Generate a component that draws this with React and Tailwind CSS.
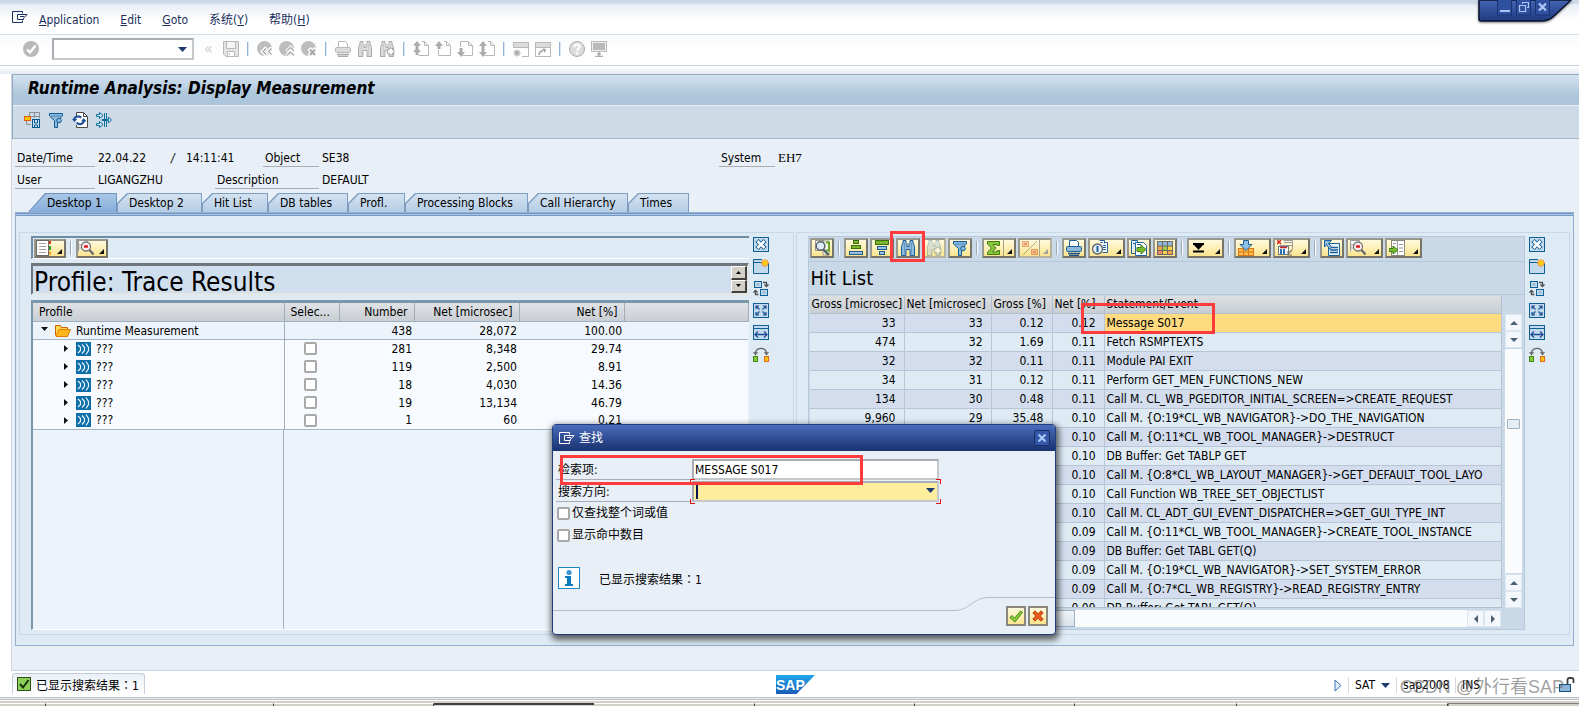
import React from "react";

const UI_FONT = "font-['DejaVu_Sans_Condensed','Noto_Sans','Noto_Sans_CJK_SC',sans-serif]";

/* ---------- icons ---------- */

function Icon({ children, w = 16, h = 16, className = "" }) {
  return (
    <svg width={w} height={h} viewBox={`0 0 ${w} ${h}`} fill="none" aria-hidden="true" className={`shrink-0 ${className}`}>
      {children}
    </svg>
  );
}

const MenuMark = ({ color = "#1b2f5c" }) => (
  <Icon w={16} h={13}>
    <path d="M10.500 2.500V.500h-10v11h10v-2" stroke={color} />
    <path d="M11.500 8.500h-6v-5h9.500l-4.500 5z" stroke={color} />
    <path d="M8 5.500h4" stroke={color} />
  </Icon>
);

const Caret = ({ color = "#1f3a6e" }) => (
  <Icon w={9} h={5}>
    <path d="M0 0h9L4.500 5z" fill={color} />
  </Icon>
);

const G = "#b9b9b9";
const GL = "#dcdcdc";

const Enter = () => (
  <Icon>
    <circle cx="8" cy="8" r="8" fill={G} />
    <path d="M4 8.500l3 3 5.500-7" stroke="#fff" strokeWidth="2.400" />
  </Icon>
);
const Save = () => (
  <Icon>
    <path d="M1 .500h14.500v15H3L.500 13V.500z" fill="#e4e4e4" stroke={G} />
    <path d="M3.500 1v6.500h9V1" fill="#f6f6f6" stroke={G} />
    <path d="M4.500 15v-4.500h7V15M6.500 12v2" fill="#fff" stroke={G} />
  </Icon>
);
const Round = ({ children }) => (
  <Icon>
    <circle cx="7.500" cy="7.500" r="7.500" fill="#bdbdbd" />
    {children}
  </Icon>
);
const Back = () => (
  <Round>
    <path d="M9.500 6.500L5.500 10.500l4 4M15 6.500l-4 4 4 4" stroke="#fff" strokeWidth="3.400" />
    <path d="M9 7.500l-3 3 3 3M14.500 7.500l-3 3 3 3" stroke="#a8a8a8" strokeWidth="1.300" />
  </Round>
);
const Exit = () => (
  <Round>
    <path d="M7.500 10.500l4-4 4 4M7.500 15l4-4 4 4" stroke="#fff" strokeWidth="3.400" />
    <path d="M8 10l3.500-3.500L15 10M8 14.500l3.500-3.500 3.500 3.500" stroke="#a8a8a8" strokeWidth="1.300" />
  </Round>
);
const Cancel = () => (
  <Round>
    <path d="M8 7.500l7 7.500M15 7.500L8 15" stroke="#fff" strokeWidth="4.500" />
    <path d="M9 8.500l5 5.500M14 8.500L9 14" stroke="#a8a8a8" strokeWidth="2" />
  </Round>
);
const Printer = ({ line = G, fill = GL, paper = "#fff", dark = "#a9a9a9" }) => (
  <Icon>
    <path d="M3.500 7V.500h7l2 2V7" fill={paper} stroke={line} />
    <rect x=".500" y="6.500" width="15" height="5" rx="1" fill={fill} stroke={line} />
    <path d="M2 13.500h12M3 15.500h10" stroke={dark} strokeWidth="1.400" />
  </Icon>
);
const Binoculars = ({ line = "#a9a9a9", fill = GL, plus }) => (
  <Icon>
    <path d="M3 .500h3v2l1 1v3h2v-3l1-1v-2h3v2l1.500 4v9h-4.500V9.500H6v6H1.500v-9L3 2.500z" fill={fill} stroke={line} />
    <path d="M4.500 3v11M11.500 3v11" stroke={line} strokeOpacity=".35" />
    {plus && (
      <>
        <path d="M8 10.500h7.500M11.750 6.700v7.600" stroke={line} strokeWidth="4.500" />
        <path d="M9 10.500h5.500M11.750 7.700v5.600" stroke="#fff" strokeWidth="2.400" />
      </>
    )}
  </Icon>
);
const Page = ({ children }) => (
  <Icon>
    <path d="M9 .500h2.500l4 4v10h-10M11.500.500v4h4" stroke={G} fill="none" />
    {children}
  </Icon>
);
const FirstPage = () => (
  <Page>
    <path d="M4 0l4 4.500H0zM2.500 4h3v6h-3zM4 6.500L8 11H0zM2.500 11h3v3h-3z" fill="#ababab" />
  </Page>
);
const PrevPage = () => (
  <Page>
    <path d="M4 0l4 5H5.500v3h-3V5H0z" fill="#ababab" />
    <path d="M3.500 9v5.500h3" stroke={G} />
  </Page>
);
const NextPage = () => (
  <Page>
    <path d="M4 16l4-5H5.500V7h-3v4H0z" fill="#ababab" />
    <path d="M3.500 6V.500h6" stroke={G} />
  </Page>
);
const LastPage = () => (
  <Page>
    <path d="M4 16l4-5H5.500V5H8L4 0 0 5h2.500v6H0z" fill="#ababab" />
  </Page>
);
const NewSession = () => (
  <Icon>
    <path d="M.500 7V1.500h15v14H9" fill="none" stroke={G} />
    <path d="M1 2h14v4H1z" fill={GL} />
    <path d="M.500 6.500h15" stroke={G} />
    <path d="M4 8.500v7M.500 12h7M1.500 9.500l5 5M6.500 9.500l-5 5" stroke="#b0b0b0" strokeWidth="1.300" />
  </Icon>
);
const Shortcut = () => (
  <Icon>
    <rect x=".500" y="1.500" width="15" height="14" stroke={G} />
    <path d="M1 2h14v4H1z" fill={GL} />
    <path d="M.500 6.500h15" stroke={G} />
    <path d="M4 14c0-3 1.500-4 4-4" stroke="#a0a0a0" strokeWidth="1.600" />
    <path d="M7 7.500l4 .500-1 4z" fill="#a0a0a0" />
  </Icon>
);
const Help = () => (
  <Icon>
    <circle cx="8" cy="8" r="7.500" fill={GL} stroke="#adadad" />
    <path d="M5.300 6.300c0-3.600 5.400-3.400 5.400-.500 0 1.800-2.700 1.900-2.700 4" stroke="#fff" strokeWidth="2" />
    <circle cx="8" cy="12.300" r="1.200" fill="#fff" />
  </Icon>
);
const Monitor = () => (
  <Icon>
    <rect x=".500" y=".500" width="15" height="10" fill="#eee" stroke={G} />
    <rect x="2" y="2" width="12" height="7" fill="#b9b9b9" />
    <path d="M8 11v4M4 15.500h8M6 13h4" stroke="#adadad" strokeWidth="1.500" />
  </Icon>
);

const SaveLayout = () => (
  <Icon>
    <path d="M5.500 9V.500h10V6M5.500 4.500h10M10.500.500v5M2.500 8v4.500h4" stroke="#8a8f96" />
    <rect x=".500" y="4.500" width="6" height="4" fill="#ffc400" stroke="#e05a14" />
    <rect x="8.500" y="7.500" width="7" height="8" fill="#cfe3f2" stroke="#00588f" />
    <path d="M10.500 8v3h3V8M10.500 15v-2h3v2" stroke="#00588f" />
  </Icon>
);
const Funnel = ({ line = "#0e5f96", fill = "#8fb9dc" }) => (
  <Icon>
    <path d="M1.500 1.500h13v2.500L9.500 8.500v7h-3v-7L1.500 4z" fill={fill} stroke={line} />
    <path d="M3 4h10" stroke={line} strokeOpacity=".5" />
    <circle cx="11" cy="8.500" r="2.300" fill={fill} stroke={line} />
  </Icon>
);
const Refresh = () => (
  <Icon>
    <path d="M4.500 4V.500h7l4 4v11h-11V13" fill="#fff" stroke="#4a4a4a" />
    <path d="M11.500.500v4h4" stroke="#4a4a4a" />
    <path d="M2 7.500c.8-3.200 5-4.200 7.200-1.700M12 9c-1 3.400-5.200 4.200-7.300 1.600" stroke="#1f4f98" strokeWidth="2.200" />
    <path d="M0 7h5l-2.500 3zM9 9.500h5.500L11.700 6z" fill="#1f4f98" />
  </Icon>
);
const Merge = () => (
  <Icon>
    <path d="M8.500 1v14M10.500 1v14" stroke="#0e6f9c" />
    <path d="M.500 2.500h3v-2l3.500 3-3.500 3v-2h-3zM.500 11.500h3v-2l3.500 3-3.500 3v-2h-3z" fill="#cfe3f2" stroke="#0e6f9c" />
    <path d="M6 7.500h6.500V5l3 3-3 3V8.500H6z" fill="#cfe3f2" stroke="#0e6f9c" />
  </Icon>
);

const Folder = () => (
  <Icon w={16} h={13}>
    <path d="M.500 11.500V1.500h5l1 2h6v2" fill="#ffd94a" stroke="#c8620a" />
    <path d="M1 12.500L4 5.500h11.500l-3 7z" fill="#ffb61c" stroke="#e07b0a" />
  </Icon>
);
const Waves = () => (
  <Icon w={15} h={14}>
    <rect width="15" height="14" fill="#0d6ea8" />
    <path d="M2 3l2.500 2.500v3L2 11M6 2.500l2.500 3v3L6 11.500M10 1.500l2.500 4v3L10 12.500" stroke="#e8f4fb" strokeWidth="1.200" />
  </Icon>
);

const Details = () => (
  <Icon>
    <rect x="1.500" y=".500" width="8" height="10" fill="#fff" stroke="#9a9a8c" />
    <rect x="9" y="1" width="6" height="14" fill="#f4f4ea" stroke="#8a8a7c" strokeWidth=".800" />
    <path d="M12 2.500h3v8h-3" stroke="#6aa62a" strokeWidth="2" />
    <circle cx="6.500" cy="6" r="4.300" fill="#dceaf5" stroke="#55606a" strokeWidth="1.400" />
    <path d="M9.500 9.500l5 5.500" stroke="#55606a" strokeWidth="2.400" />
  </Icon>
);
const SortAsc = () => (
  <Icon>
    <rect x="5.500" y=".500" width="5" height="3" fill="#7bb52c" stroke="#3d6f12" />
    <rect x="3.500" y="5.500" width="9" height="3" fill="#7bb52c" stroke="#3d6f12" />
    <rect x="1.500" y="11.500" width="13" height="3" fill="#9cc3e4" stroke="#1d5c94" />
  </Icon>
);
const SortDesc = () => (
  <Icon>
    <rect x="1.500" y=".500" width="13" height="4" fill="#7bb52c" stroke="#3d6f12" />
    <rect x="3.500" y="6.500" width="9" height="3" fill="#9cc3e4" stroke="#1d5c94" />
    <rect x="5.500" y="11.500" width="5" height="3" fill="#9cc3e4" stroke="#1d5c94" />
  </Icon>
);
const Sigma = () => (
  <Icon>
    <path d="M1.500 1.500h12v4h-2.500v-1H7l3 3.500-3.500 4H11v-1.500h2.500v4h-12V12.500l4-4.500-4-4z" fill="#8cc63f" stroke="#3c7d12" />
  </Icon>
);
const SubTotal = () => (
  <Icon>
    <g opacity=".6">
      <path d="M1 15L15 1" stroke="#8a7a60" />
      <rect x=".500" y="1.500" width="6" height="5" fill="#f9b27a" stroke="#e0763a" />
      <rect x="9.500" y="9.500" width="6" height="5" fill="#f9a27a" stroke="#d0663a" />
      <path d="M2 3l3 2M5 3L2 5M11 11l3 2M14 11l-3 2" stroke="#c0502a" />
    </g>
  </Icon>
);
const Views = () => (
  <Icon>
    <path d="M8.500 2.500h7v10h-5" fill="#fff" stroke="#22649c" />
    <path d="M7.500.500h5v3" fill="#fff" stroke="#22649c" />
    <path d="M11 5.500h3M11 7.500h3M11 9.500h3" stroke="#22649c" />
    <circle cx="5.500" cy="9" r="5" fill="#e3eef6" stroke="#5c6670" strokeWidth="1.300" />
    <path d="M5.500 6v6" stroke="#22649c" strokeWidth="2" />
  </Icon>
);
const Export = () => (
  <Icon>
    <path d="M.500 13.500V.500h6v3M.500 13.500h4" fill="#dcebf7" stroke="#22649c" />
    <path d="M4.500 2.500h8l3 3v10h-11z" fill="#fff" stroke="#22649c" />
    <path d="M2 3.500h3M6 4.500h4" stroke="#22649c" />
    <path d="M6 7.500h4V5l5 4.500-5 4.500v-2.500H6z" fill="#7bbf2c" stroke="#3a7d12" />
  </Icon>
);
const LayoutGrid = () => (
  <Icon>
    <path d="M0 1h16v14H0z" fill="#6a6a60" />
    <path d="M1 2h4v3.500H1zM6 2h4v3.500H6zM11 2h4v3.500h-4z" fill="#8fb8dc" />
    <path d="M1 6.500h4V10H1z" fill="#f5a04a" />
    <path d="M6 6.500h4V10H6z" fill="#9ccc4a" />
    <path d="M11 6.500h4V10h-4z" fill="#ffd24a" />
    <path d="M1 11h4v3H1z" fill="#f08a6a" />
    <path d="M6 11h4v3H6z" fill="#ffd24a" />
    <path d="M11 11h4v3h-4z" fill="#f5a04a" />
  </Icon>
);
const ToEnd = () => (
  <Icon>
    <path d="M2 3h11v2H2zM3 5h9l-4.500 5zM2 10.500h11v2H2z" fill="#000" />
  </Icon>
);
const Download = () => (
  <Icon>
    <rect x=".500" y="8.500" width="15" height="7" fill="#ffbe4a" stroke="#d9781a" />
    <path d="M.500 12h15M5.500 9v6M10.500 9v6" stroke="#d9781a" />
    <path d="M5.500.500h5v4h3.500l-6 6-6-6h3.500z" fill="#8fc0e4" stroke="#1c5f99" />
  </Icon>
);
const GridDelete = () => (
  <Icon>
    <path d="M6.500.500h9v9M3 5.500h12.500v4M7 2.500h8" stroke="#9a9a9a" />
    <rect x="1.500" y="6.500" width="10" height="8" fill="#fff" stroke="#6a7a8a" />
    <path d="M3 9h2v5H3zM6 9h2v5H6z" fill="#2a6fb0" />
    <path d="M3 7.500h7" stroke="#d92020" strokeWidth="1.500" />
    <path d="M0 0l4 4M4 0L0 4" stroke="#d92020" strokeWidth="1.400" />
    <path d="M15 10l-4 4M11 11v4h4" stroke="#707070" strokeWidth="1.200" />
  </Icon>
);
const SelectLayout = () => (
  <Icon>
    <path d="M4.500 3.500h11v12h-11z" fill="#e9f3fa" stroke="#1c5f99" />
    <path d="M6 7.500h8M6 10h8M6 12.500h8" stroke="#1c5f99" strokeWidth="1.300" />
    <path d="M.500.500h7L4.500 3l3 4.500-2 1.500-3-4.500L.500 7z" fill="#8fc0e4" stroke="#1c5f99" />
  </Icon>
);
const ZoomSearch = () => (
  <Icon>
    <path d="M.500 11.500V.500h9v3" fill="#f6f6f0" stroke="#9a9a9a" />
    <path d="M1 5h5M1 8h4" stroke="#999" />
    <circle cx="8" cy="6.500" r="4.500" fill="#fdeeee" stroke="#787878" strokeWidth="1.300" />
    <path d="M6 6.500h4" stroke="#e01818" strokeWidth="2.400" />
    <path d="M11.500 10l4 4.500" stroke="#6a6a6a" strokeWidth="2.400" />
  </Icon>
);
const MoveCol = () => (
  <Icon>
    <rect x="2.500" y=".500" width="13" height="15" fill="#fff" stroke="#8a8a7c" />
    <path d="M8.500 1v14M10 4.500h4M10 8h4M10 11.500h4M4 3.500h3" stroke="#9a9a9a" />
    <path d="M0 8.500h4V6l5 4-5 4v-2.500H0z" fill="#7bbf2c" stroke="#3a7d12" />
  </Icon>
);
const ListIcon = () => (
  <Icon w={16} h={16}>
    <path d="M12 1h3v3h-3z" fill="#d93a1a" />
    <path d="M12 6h3v4h-3z" fill="#3a9a2a" />
    <path d="M12 11.500h3v3h-3z" fill="#e8a020" />
    <rect x=".500" y=".500" width="12" height="15" fill="#fff" stroke="#6a6a60" />
    <path d="M3 3.500h7M3 6.500h7M3 9.500h7M3 12.500h7" stroke="#a0a0a0" />
  </Icon>
);

const BL = "#0e5f96";
const BF = "#c3d9ec";
const SideIcons = [
  <Icon key="close" h={15}>
    <rect x=".500" y=".500" width="15" height="14" fill={BF} stroke={BL} />
    <path d="M4 3.500l8 8M12 3.500l-8 8" stroke={BL} strokeWidth="4.500" />
    <path d="M4.500 4l7 7M11.500 4l-7 7" stroke="#fff" strokeWidth="2.500" />
  </Icon>,
  <Icon key="new" h={15}>
    <path d="M.500.500h15v14H.500z" fill={BF} stroke={BL} />
    <path d="M1 3.500h8" stroke={BL} />
    <path d="M9 0h7v4H9z" fill="#deebf5" />
    <path d="M12 0v8M8 4h8M9.200 1.200l5.600 5.600M14.800 1.200L9.200 6.800" stroke="#f08a1a" strokeWidth="1.400" />
    <circle cx="12" cy="4" r="2.500" fill="#ffc90e" />
  </Icon>,
  <Icon key="swap" h={15}>
    <rect x="1.500" y=".500" width="7" height="6" fill={BF} stroke={BL} />
    <rect x="7.500" y="8.500" width="7" height="6" fill={BF} stroke={BL} />
    <rect x="3.500" y="2.500" width="3" height="2" fill="#8fb4d6" />
    <rect x="9.500" y="10.500" width="3" height="2" fill="#8fb4d6" />
    <path d="M10 1.500h3.500V5M11.500 3.500l2 2 2-2M5.500 13.500H2.500V10M.500 11.500l2-2 2 2" stroke="#505050" strokeWidth="1.300" />
  </Icon>,
  <Icon key="full" h={15}>
    <rect x=".500" y=".500" width="15" height="14" fill={BF} stroke={BL} />
    <path d="M3 6V3h3M10 3h3v3M3 9v3h3M10 12h3V9M3 3l3.500 3.500M13 3L9.500 6.500M3 12l3.500-3.500M13 12L9.500 8.500" stroke="#1f4f98" strokeWidth="1.200" />
  </Icon>,
  <Icon key="width" h={15}>
    <rect x=".500" y=".500" width="15" height="14" fill={BF} stroke={BL} />
    <path d="M1 3.500h14" stroke={BL} />
    <path d="M2 9.500h12M5 6.500l-3 3 3 3M11 6.500l3 3-3 3" stroke="#1f4f98" strokeWidth="1.300" />
  </Icon>,
  <Icon key="link" h={15}>
    <path d="M2.500 7V5.500C4 0 12 0 13.500 5.500V7M.500 5l2 2.500L4.500 5M11.500 5l2 2.500 2-2.500" stroke="#606060" strokeWidth="1.200" />
    <rect x=".500" y="9.500" width="4" height="5" fill="#8cc63f" stroke="#3c8d12" />
    <rect x="11.500" y="9.500" width="4" height="5" fill="#ffc20e" stroke="#e8641a" />
  </Icon>,
];
const sideNames = ["Close", "New window", "Swap", "Full screen", "Full width", "Link"];

/* ---------- data ---------- */

const tabs = ["Desktop 1", "Desktop 2", "Hit List", "DB tables", "Profl.", "Processing Blocks", "Call Hierarchy", "Times"];
const tabWidths = ["w-[89px]", "w-[85px]", "w-[66px]", "w-[80px]", "w-[57px]", "w-[123px]", "w-[100px]", "w-[61px]"];

const profileRows = [
  ["281", "8,348", "29.74"],
  ["119", "2,500", "8.91"],
  ["18", "4,030", "14.36"],
  ["19", "13,134", "46.79"],
  ["1", "60", "0.21"],
];

const hits = [
  ["33", "33", "0.12", "0.12", "Message S017"],
  ["474", "32", "1.69", "0.11", "Fetch RSMPTEXTS"],
  ["32", "32", "0.11", "0.11", "Module PAI EXIT"],
  ["34", "31", "0.12", "0.11", "Perform GET_MEN_FUNCTIONS_NEW"],
  ["134", "30", "0.48", "0.11", "Call M. CL_WB_PGEDITOR_INITIAL_SCREEN=>CREATE_REQUEST"],
  ["9,960", "29", "35.48", "0.10", "Call M. {O:19*CL_WB_NAVIGATOR}->DO_THE_NAVIGATION"],
  ["", "", "", "0.10", "Call M. {O:11*CL_WB_TOOL_MANAGER}->DESTRUCT"],
  ["", "", "", "0.10", "DB Buffer: Get TABLP GET"],
  ["", "", "", "0.10", "Call M. {O:8*CL_WB_LAYOUT_MANAGER}->GET_DEFAULT_TOOL_LAYO"],
  ["", "", "", "0.10", "Call Function WB_TREE_SET_OBJECTLIST"],
  ["", "", "", "0.10", "Call M. CL_ADT_GUI_EVENT_DISPATCHER=>GET_GUI_TYPE_INT"],
  ["", "", "", "0.09", "Call M. {O:11*CL_WB_TOOL_MANAGER}->CREATE_TOOL_INSTANCE"],
  ["", "", "", "0.09", "DB Buffer: Get TABL GET(Q)"],
  ["", "", "", "0.09", "Call M. {O:19*CL_WB_NAVIGATOR}->SET_SYSTEM_ERROR"],
  ["", "", "", "0.09", "Call M. {O:7*CL_WB_REGISTRY}->READ_REGISTRY_ENTRY"],
  ["", "", "", "0.09", "DB Buffer: Get TABL GET(Q)"],
];

/* ---------- window chrome ---------- */

function MenuBar() {
  const link = "text-[#1b2f5c]";
  return (
    <header className="flex h-[35px] shrink-0 border-b border-[#d5e0ea] bg-[linear-gradient(#ccd9e9_0,#ccd9e9_3px,#e9eef6_5px,#ffffff_20px)]">
      <nav className="flex items-center gap-[21px] pt-1.5 pl-3">
        <button type="button" aria-label="System menu" className="-mr-2.5 pb-1.5">
          <MenuMark />
        </button>
        <a href="#application" className={link}><u>A</u>pplication</a>
        <a href="#edit" className={link}><u>E</u>dit</a>
        <a href="#goto" className={link}><u>G</u>oto</a>
        <a href="#system" className={link}>系统(<u>Y</u>)</a>
        <a href="#help" className={link}>帮助(<u>H</u>)</a>
      </nav>
    </header>
  );
}

function WindowControls() {
  return (
    <div className="absolute top-0 right-0 h-[26px] w-[102px]">
      <svg width="102" height="26" viewBox="0 0 102 26" className="drop-shadow-[0_1px_1px_rgba(0,0,0,0.5)]" aria-hidden="true">
        <defs>
          <linearGradient id="ctl" x1="0" y1="0" x2="0" y2="1">
            <stop offset="0" stopColor="#4465b4" />
            <stop offset="1" stopColor="#1e3a80" />
          </linearGradient>
        </defs>
        <path d="M2 0V19q0 2 2 2H64q8 0 13-5L94 0z" fill="url(#ctl)" stroke="#0a1430" strokeWidth="1.500" />
        <g stroke="#1a3270" fill="#2f509e">
          <rect x="20.500" y="-1" width="14" height="16" />
          <rect x="39.500" y="-1" width="14" height="16" />
          <rect x="58.500" y="-1" width="14" height="16" />
        </g>
        <g stroke="#a9c4f5" fill="none">
          <path d="M23 11h10" strokeWidth="2" />
          <path d="M45.500 4V2.500h6v5H50M42.500 5.500h6v6h-6z" strokeWidth="1.200" />
          <path d="M62 3.500l7 7M69 3.500l-7 7" strokeWidth="2.400" />
        </g>
      </svg>
    </div>
  );
}

function Sep() {
  return <span className="h-3.5 w-0.5 border-l border-[#8fb4d8] bg-[#dbe8f4]" />;
}

function ToolButton({ label, children }) {
  return (
    <button type="button" aria-label={label} className="shrink-0">
      {children}
    </button>
  );
}

function SystemToolbar() {
  return (
    <div className="flex h-[31px] shrink-0 items-center border-b border-[#c9cfd8] bg-[linear-gradient(#f8fafc,#ffffff_16px)] pb-0.5 pl-[23px]">
      <ToolButton label="Enter"><Enter /></ToolButton>
      <div className="ml-[13px] flex h-[22px] w-[142px] items-center border-2 border-[#a9adb3] border-r-[#c4c8cc] border-b-[#c4c8cc] bg-white pr-[5px]">
        <input aria-label="Command" className="min-w-0 flex-1 bg-transparent px-1 outline-none" />
        <button type="button" aria-label="Command history"><Caret /></button>
      </div>
      <span className="ml-2.5 w-[9px] text-[16px] text-[#cfcfcf]">«</span>
      <div className="ml-2.5 flex items-center gap-2">
        <ToolButton label="Save"><Save /></ToolButton>
        <Sep />
        <div className="flex gap-1.5">
          <ToolButton label="Back"><Back /></ToolButton>
          <ToolButton label="Exit"><Exit /></ToolButton>
          <ToolButton label="Cancel"><Cancel /></ToolButton>
        </div>
        <Sep />
        <div className="flex gap-1.5">
          <ToolButton label="Print"><Printer /></ToolButton>
          <ToolButton label="Find"><Binoculars /></ToolButton>
          <ToolButton label="Find next"><Binoculars plus /></ToolButton>
        </div>
        <Sep />
        <div className="flex gap-1.5">
          <ToolButton label="First page"><FirstPage /></ToolButton>
          <ToolButton label="Previous page"><PrevPage /></ToolButton>
          <ToolButton label="Next page"><NextPage /></ToolButton>
          <ToolButton label="Last page"><LastPage /></ToolButton>
        </div>
        <Sep />
        <div className="flex gap-1.5">
          <ToolButton label="New session"><NewSession /></ToolButton>
          <ToolButton label="Create shortcut"><Shortcut /></ToolButton>
        </div>
        <Sep />
        <div className="flex gap-1.5">
          <ToolButton label="Help"><Help /></ToolButton>
          <ToolButton label="Customize layout"><Monitor /></ToolButton>
        </div>
      </div>
    </div>
  );
}

function Field({ label, labelWidth, value, valueWidth = "", valueClass = "" }) {
  return (
    <div className="flex h-[17px] leading-4">
      <dt className={`${labelWidth} border-b border-[#a9adb3] pl-0.5`}>{label}</dt>
      <dd className={`pl-[3px] ${valueWidth} ${valueClass}`}>{value}</dd>
    </div>
  );
}

function HeaderFields() {
  return (
    <dl className="flex flex-col gap-[5px] pt-[11px] pl-[3px]">
      <div className="flex">
        <Field label="Date/Time" labelWidth="w-20" value="22.04.22" valueWidth="w-[76px]" />
        <span className="w-[15px] leading-4 italic">/</span>
        <span className="w-[77px] leading-4">14:11:41</span>
        <Field label="Object" labelWidth="w-14" value="SE38" valueWidth="w-[400px]" />
        <Field
          label="System"
          labelWidth="w-14"
          value="EH7"
          valueClass="font-['Liberation_Serif',serif] text-[13px]"
        />
      </div>
      <div className="flex">
        <Field label="User" labelWidth="w-20" value="LIGANGZHU" valueWidth="w-[120px]" />
        <Field label="Description" labelWidth="w-[104px]" value="DEFAULT" />
      </div>
    </dl>
  );
}

function Tab({ label, width, active }) {
  return (
    <button
      type="button"
      role="tab"
      aria-selected={active}
      className={`relative flex h-[19px] shrink-0 items-center pt-px ${width} ${active ? "pl-[19px]" : "pl-3"}`}
    >
      <span
        className={`absolute inset-0 ${
          active
            ? "bg-[#6f94bf] [clip-path:polygon(0_100%,17px_0,100%_0,100%_100%)]"
            : "bg-[#7c9cc0] [clip-path:polygon(0_10px,10px_0,100%_0,100%_100%,0_100%)]"
        }`}
      />
      <span
        className={`absolute inset-x-px top-px bottom-0 ${
          active
            ? "bg-[linear-gradient(#a9c6e6,#86add9)] [clip-path:polygon(0_100%,17px_0,100%_0,100%_100%)]"
            : "bg-[linear-gradient(#d3e2f1,#b5cde6)] [clip-path:polygon(0_10px,10px_0,100%_0,100%_100%,0_100%)]"
        }`}
      />
      <span className="relative whitespace-nowrap">{label}</span>
    </button>
  );
}

/* ---------- panes ---------- */

function YellowButton({ label, icon, menu, split, disabled, small }) {
  const width = small ? "w-8" : split ? "w-[34px]" : menu ? "w-[37px]" : "w-6";
  return (
    <button
      type="button"
      aria-label={label}
      disabled={disabled}
      className={`relative flex shrink-0 items-center ${small ? "h-[19px] pl-0" : "h-5 pl-0.5"} ${width} border-2 bg-[linear-gradient(#fffadd,#fbe48f)] ${
        disabled ? "border-[#b5b39f]" : "border-[#77756a]"
      } border-t-[#9a988c] border-l-[#9a988c]`}
    >
      {icon}
      {split && <span className="absolute inset-y-0 right-2.5 w-px bg-[#a8a48c]" />}
      {(menu || split || small) && (
        <svg className="absolute right-0.5 bottom-0.5" width="5" height="5" viewBox="0 0 5 5" aria-hidden="true">
          <path d="M5 0v5H0z" fill={disabled ? "#a0a0a0" : "#111"} />
        </svg>
      )}
    </button>
  );
}

function BarSep() {
  return <span className="mx-0.5 h-3.5 w-0.5 border-l border-[#9aa6b2] bg-white" />;
}

function SideBar() {
  return (
    <div className="flex w-4 shrink-0 flex-col gap-[7px] pt-px">
      {SideIcons.map((icon, i) => (
        <button key={i} type="button" aria-label={sideNames[i]}>
          {icon}
        </button>
      ))}
    </div>
  );
}

function Group({ children }) {
  return (
    <section className="flex min-h-0 min-w-0 gap-1 border border-[#c9d8e8] pt-[3px] pr-6 pb-1 pl-[11px]">
      {children}
    </section>
  );
}

function ProfilePane() {
  const th = "h-[18px] border-r border-[#a3adb7] border-b border-b-[#9fb0c0] bg-[linear-gradient(#dfe2e5,#c9ced4)] px-1.5 py-0 font-normal";
  const num = "pr-0.5 text-right";
  return (
    <Group>
      <div className="flex min-w-0 flex-1 flex-col">
        <div className="flex h-[23px] shrink-0 items-center gap-0.5 border-t-2 border-l-2 border-[#6f8ea3] border-b border-b-white pl-px">
          <YellowButton small label="Columns" icon={<ListIcon />} />
          <BarSep />
          <YellowButton small label="Search" icon={<ZoomSearch />} />
        </div>
        <div className="mt-1 flex h-8 shrink-0 border-2 border-t-[3px] border-[#6f777d] border-r-[#e6e6e2] border-b-[#e6e6e2] bg-[#d0dfee]">
          <h2 className="flex-1 pl-px text-[26px] leading-[32px] whitespace-nowrap">Profile: Trace Results</h2>
          <div className="flex w-4 flex-col">
            {["Up", "Down"].map((d) => (
              <button
                key={d}
                type="button"
                aria-label={d}
                className="flex flex-1 items-center justify-center border border-white border-r-2 border-b-2 border-r-[#404040] border-b-[#404040] bg-[#d4d0c8]"
              >
                <svg width="5" height="3" viewBox="0 0 5 3" aria-hidden="true">
                  <path d={d === "Up" ? "M0 3h5L2.500 0z" : "M0 0h5L2.500 3z"} fill="#000" />
                </svg>
              </button>
            ))}
          </div>
        </div>
        <div className="mt-[5px] flex min-h-0 flex-1 flex-col overflow-hidden border-t-[3px] border-l-2 border-[#7b98aa] border-b border-b-white bg-[#ecf3fb]">
          <table className="w-full table-fixed border-collapse">
            <colgroup>
              <col className="w-[251px]" />
              <col className="w-[55px]" />
              <col className="w-[75px]" />
              <col className="w-[105px]" />
              <col className="w-[105px]" />
              <col />
            </colgroup>
            <thead>
              <tr className="leading-[18px]">
                <th className={`${th} text-left`}>Profile</th>
                <th className={`${th} text-left`}>Selec...</th>
                <th className={`${th} text-right`}>Number</th>
                <th className={`${th} text-right`}>Net [microsec]</th>
                <th className={`${th} text-right`}>Net [%]</th>
                <th className={th} aria-label="Blank" />
              </tr>
            </thead>
            <tbody>
              <tr className="h-[18px] border-b border-[#a3b5c6] leading-4">
                <td className="border-r border-[#a3adb7]">
                  <div className="flex items-center pl-2">
                    <button type="button" aria-label="Collapse" className="w-[14px] pb-1">
                      <Icon w={8} h={4}><path d="M0 0h7L3.500 4z" fill="#111" /></Icon>
                    </button>
                    <Folder />
                    <span className="pl-[5px]">Runtime Measurement</span>
                  </div>
                </td>
                <td />
                <td className={num}>438</td>
                <td className={num}>28,072</td>
                <td className={num}>100.00</td>
                <td />
              </tr>
              {profileRows.map((r, i) => (
                <tr key={i} className={`h-[18px] bg-[#f7fbff] leading-4 ${i === 4 ? "border-b border-[#a3b5c6]" : ""}`}>
                  <td className="border-r border-[#a3adb7]">
                    <div className="flex items-center pl-[31px]">
                      <button type="button" aria-label="Expand" className="w-3">
                        <Icon w={4} h={7}><path d="M0 0v7l4-3.500z" fill="#111" /></Icon>
                      </button>
                      <Waves />
                      <span className="pl-[5px]">???</span>
                    </div>
                  </td>
                  <td>
                    <input
                      type="checkbox"
                      aria-label={`Select row ${i + 1}`}
                      className="ml-[19px] block size-[13px] appearance-none rounded-[2px] border-2 border-[#a9a9a9] bg-white"
                    />
                  </td>
                  <td className={num}>{r[0]}</td>
                  <td className={num}>{r[1]}</td>
                  <td className={num}>{r[2]}</td>
                  <td />
                </tr>
              ))}
            </tbody>
          </table>
          <div className="w-[251px] flex-1 border-r border-[#a3adb7]" />
        </div>
      </div>
      <SideBar />
    </Group>
  );
}

function ScrollButton({ dir }) {
  const d = {
    up: "M0 4h8L4 0z",
    down: "M0 0h8L4 4z",
    left: "M4 0v8L0 4z",
    right: "M0 0v8l4-4z",
  }[dir];
  return (
    <button
      type="button"
      aria-label={`Scroll ${dir}`}
      className="flex size-[17px] shrink-0 items-center justify-center border border-[#dce6f0] bg-[#f4f7fb]"
    >
      <svg width="8" height="8" viewBox={dir === "up" || dir === "down" ? "0 -2 8 8" : "-2 0 8 8"} aria-hidden="true">
        <path d={d} fill="#4a5f70" />
      </svg>
    </button>
  );
}

function HitToolbar() {
  return (
    <div className="flex h-[25px] shrink-0 items-center gap-0.5 border-b border-[#b7c8da] pb-0.5 pl-px">
      <YellowButton label="Details" icon={<Details />} />
      <BarSep />
      <YellowButton label="Sort ascending" icon={<SortAsc />} />
      <YellowButton label="Sort descending" icon={<SortDesc />} />
      <div className="relative">
        <YellowButton label="Find" icon={<Binoculars line="#1c5f99" fill="#8fb9dc" />} />
        <span className="pointer-events-none absolute -top-[7px] -left-[6px] z-10 h-[31px] w-[35px] border-[3px] border-[#ff3b3b]" />
      </div>
      <YellowButton disabled label="Find next" icon={<span className="opacity-50"><Binoculars line="#5f8aa8" fill="#c5d8e0" plus /></span>} />
      <YellowButton label="Filter" icon={<Funnel />} />
      <BarSep />
      <YellowButton split label="Total" icon={<Sigma />} />
      <YellowButton split disabled label="Subtotal" icon={<SubTotal />} />
      <BarSep />
      <YellowButton label="Print" icon={<Printer line="#1c5f99" fill="#8fb9dc" dark="#1c4f89" />} />
      <YellowButton menu label="Views" icon={<Views />} />
      <YellowButton label="Export" icon={<Export />} />
      <YellowButton label="Layout" icon={<LayoutGrid />} />
      <BarSep />
      <YellowButton menu label="Go to end" icon={<ToEnd />} />
      <BarSep />
      <YellowButton menu label="Download" icon={<Download />} />
      <YellowButton menu label="Change layout" icon={<GridDelete />} />
      <BarSep />
      <YellowButton label="Choose layout" icon={<SelectLayout />} />
      <YellowButton menu label="Search" icon={<ZoomSearch />} />
      <YellowButton menu label="Move column" icon={<MoveCol />} />
    </div>
  );
}

function HitListPane() {
  const th = "h-[18px] overflow-hidden border-r border-b border-[#b3bfca] bg-[linear-gradient(#dcdfe1,#c8ced4)] px-0.5 py-0 text-left font-normal whitespace-nowrap";
  const num = "border-r border-b border-[#b7c5d4] py-0 pr-2 text-right";
  return (
    <Group>
      <div className="flex min-w-0 flex-1 flex-col border border-[#b7c8da] bg-[#cad9e8]">
        <HitToolbar />
        <h2 className="h-[33px] shrink-0 border-b border-[#b7c8da] pl-0.5 text-[20px] leading-[32px]">Hit List</h2>
        <div className="flex min-h-0 flex-1 gap-[3px] pt-px pr-0.5 pl-px">
          <div className="relative min-w-0 flex-1 border-b border-[#b3bfca]">
            <div className="h-full overflow-hidden">
              <table className="w-full table-fixed border-separate border-spacing-0">
                <colgroup>
                  <col className="w-[95px]" />
                  <col className="w-[87px]" />
                  <col className="w-[61px]" />
                  <col className="w-[52px]" />
                  <col />
                </colgroup>
                <thead>
                  <tr className="leading-[17px]">
                    <th className={th}>Gross [microsec]</th>
                    <th className={th}>Net [microsec]</th>
                    <th className={th}>Gross [%]</th>
                    <th className={th}>Net [%]</th>
                    <th className={th}>Statement/Event</th>
                  </tr>
                </thead>
                <tbody>
                  {hits.map((r, i) => (
                    <tr key={i} className={`h-[19px] leading-4 ${i % 2 ? "bg-[#deebf5]" : "bg-[#d3dded]"}`}>
                      {r.slice(0, 4).map((v, j) => (
                        <td key={j} className={num}>{v}</td>
                      ))}
                      <td
                        className={`overflow-hidden border-r border-b border-[#b7c5d4] py-0 pl-0.5 whitespace-nowrap ${
                          i === 0 ? "bg-[#ffdb80]" : ""
                        }`}
                      >
                        {r[4]}
                      </td>
                    </tr>
                  ))}
                </tbody>
              </table>
            </div>
            <span className="pointer-events-none absolute top-[7px] left-[271px] h-[31px] w-[134px] border-[3px] border-[#ff3b3b]" />
          </div>
          <div className="mt-[18px] flex w-[17px] shrink-0 flex-col bg-[#fafbfc]">
            <ScrollButton dir="up" />
            <ScrollButton dir="down" />
            <div className="flex flex-1 flex-col border-y border-[#c9d8e8] px-0.5">
              <div className="basis-[70px]" />
              <div className="h-2.5 rounded-[1px] border border-[#9fb0c0] bg-[#e6edf3]" />
            </div>
            <ScrollButton dir="up" />
            <ScrollButton dir="down" />
          </div>
        </div>
        <div className="mt-0.5 mb-0.5 ml-px mr-[23px] flex h-[17px] shrink-0 bg-[#fafbfc]">
          <div className="w-[265px] border border-[#9fb0c0] bg-[linear-gradient(#f0f4f8,#d8e2ea)]" />
          <div className="flex-1" />
          <ScrollButton dir="left" />
          <ScrollButton dir="right" />
        </div>
      </div>
      <SideBar />
    </Group>
  );
}

/* ---------- shared message ---------- */

function ResultMessage() {
  return (
    <span>
      已显示搜索结果<span className="font-['Noto_Sans_CJK_TC',sans-serif]">：</span>1
    </span>
  );
}

/* ---------- dialog ---------- */

function Corners() {
  const c = "pointer-events-none absolute size-[5px] border-[#e01010]";
  return (
    <>
      <span className={`${c} -top-0.5 -left-0.5 border-t border-l`} />
      <span className={`${c} -top-0.5 -right-0.5 border-t border-r`} />
      <span className={`${c} -bottom-0.5 -left-0.5 border-b border-l`} />
      <span className={`${c} -right-0.5 -bottom-0.5 border-r border-b`} />
    </>
  );
}

function FindDialog() {
  const label = "w-[136px] shrink-0 border-b border-[#a9adb3] pl-0.5 leading-[22px]";
  const field = "h-[21px] w-full border-2 border-[#a9adb3] border-r-[#c4c8cc] border-b-[#c4c8cc] px-px";
  return (
    <div
      role="dialog"
      aria-label="查找"
      className="absolute top-[424px] left-[552px] flex h-[211px] w-[504px] flex-col overflow-hidden rounded-[4px] border border-[#223c7c] bg-[#e8eff6] shadow-[1px_3px_6px_2px_rgba(0,0,0,0.6)]"
    >
      <div className="flex h-[26px] shrink-0 items-center gap-1 bg-[linear-gradient(#4a6cbc,#19326f)] pr-[5px] pl-1.5 text-white">
        <MenuMark color="#fff" />
        <span className="flex-1">查找</span>
        <button
          type="button"
          aria-label="Close"
          className="flex size-4 items-center justify-center rounded-[2px] border border-[#152c66] bg-[#3457a8]"
        >
          <svg width="8" height="8" viewBox="0 0 8 8" aria-hidden="true">
            <path d="M.500.500l7 7M7.500.500l-7 7" stroke="#a9c8fa" strokeWidth="2.200" />
          </svg>
        </button>
      </div>
      <div className="relative flex flex-1 flex-col pt-2 pl-[3px]">
        <div className="flex h-[21px]">
          <label htmlFor="term" className={label}>检索项:</label>
          <div className="w-[247px]">
            <input id="term" defaultValue="MESSAGE S017" className={`${field} bg-white outline-none`} />
          </div>
        </div>
        <div className="mt-px flex h-[21px]">
          <label htmlFor="direction" className={label}>搜索方向:</label>
          <div className="relative w-[247px]">
            <select id="direction" className={`${field} appearance-none bg-[#ffed9e] outline-none`} defaultValue="">
              <option value="" />
            </select>
            <span className="pointer-events-none absolute top-1 left-1 h-3.5 w-0.5 bg-[#0a1450]" />
            <span className="pointer-events-none absolute top-[7px] right-1">
              <Caret />
            </span>
            <Corners />
          </div>
        </div>
        <label className="flex h-[22px] items-center gap-0.5 pl-px">
          <input type="checkbox" className="size-[13px] appearance-none rounded-[2px] border-2 border-[#a9a9a9] bg-white" />
          仅查找整个词或值
        </label>
        <label className="flex h-[22px] items-center gap-0.5 pl-px">
          <input type="checkbox" className="size-[13px] appearance-none rounded-[2px] border-2 border-[#a9a9a9] bg-white" />
          显示命中数目
        </label>
        <div className="mt-5 flex items-center gap-[19px] pl-0.5">
          <Icon w={22} h={22}>
            <rect x=".500" y=".500" width="21" height="21" fill="#fff" stroke="#1d86c4" />
            <circle cx="11" cy="5.500" r="2.600" fill="#3a96cc" />
            <path d="M7 9h6v8h2v2H7v-2h2v-6H7z" fill="#0a7abf" />
          </Icon>
          <div className="pt-1"><ResultMessage /></div>
        </div>
        <span className="pointer-events-none absolute top-1 left-[7px] h-[30px] w-[303px] border-[3px] border-[#ff3b3b]" />
      </div>
      <div className="flex h-[37px] shrink-0 items-stretch">
        <div className="mt-[13px] flex-1 border-t border-[#b3bfcc]" />
        <svg width="32" height="14" viewBox="0 0 32 14" className="shrink-0" aria-hidden="true">
          <path d="M0 13.500C12 13.500 18 .500 32 .500" fill="none" stroke="#b3bfcc" />
        </svg>
        <div className="flex gap-0.5 border-t border-[#b3bfcc] pt-2 pr-[7px] pl-[18px]">
          <button type="button" aria-label="Continue" className="flex size-5 items-center justify-center border-2 border-[#8a887c] bg-[linear-gradient(#fffadd,#fbe48f)]">
            <svg width="14" height="13" viewBox="0 0 14 13" aria-hidden="true">
              <path d="M.800 7.500L3 5.500l2.500 2.800L11.500 1l2 1.300L6 12z" fill="#8ccf3a" stroke="#3f8a1a" />
            </svg>
          </button>
          <button type="button" aria-label="Cancel" className="flex size-5 items-center justify-center border-2 border-[#8a887c] bg-[linear-gradient(#fffadd,#fbe48f)]">
            <svg width="12" height="12" viewBox="0 0 12 12" aria-hidden="true">
              <path d="M3 .800L6 3.800l3-3L11.200 3l-3 3 3 3L9 11.200l-3-3-3 3L.800 9l3-3-3-3z" fill="#e85a1a" stroke="#b83a10" />
            </svg>
          </button>
        </div>
      </div>
    </div>
  );
}

/* ---------- footer ---------- */

function StatusBar() {
  const sep = <span className="h-4 w-px bg-[#d5d9de]" />;
  return (
    <footer className="relative flex h-[26px] shrink-0 items-start bg-white">
      <div className="flex flex-1">
        <div className="mt-0.5 ml-3 flex h-[21px] items-center gap-[5px] rounded-t-[3px] border border-b-0 border-[#c5cfdc] bg-[linear-gradient(#eaf0f6,#ffffff)] pr-[5px] pl-1">
          <Icon w={14} h={14}>
            <rect x=".500" y=".500" width="13" height="13" fill="#8cd05a" stroke="#2c5018" />
            <path d="M3 7l3 3.500L11.500 3" stroke="#15330a" strokeWidth="2" />
          </Icon>
          <div className="pt-0.5"><ResultMessage /></div>
        </div>
      </div>
      <svg width="40" height="20" viewBox="0 0 40 20" className="mt-1 ml-4 shrink-0" aria-label="SAP">
        <defs>
          <linearGradient id="sap" x1="0" y1="0" x2="0" y2="1">
            <stop offset="0" stopColor="#1fa8ea" />
            <stop offset="1" stopColor="#1a5cb8" />
          </linearGradient>
        </defs>
        <path d="M0 0h39L20.500 19H0z" fill="url(#sap)" />
        <text x="0" y="15" fontFamily="Liberation Sans, sans-serif" fontWeight="700" fontSize="14" fill="#fff">SAP</text>
      </svg>
      <div className="flex flex-1 items-center justify-end gap-1.5 pt-[5px] pr-1">
        <Icon w={8} h={13}><path d="M1 1v11l6-5.500z" fill="#e3edf7" stroke="#3f75b5" /></Icon>
        {sep}
        <span>SAT</span>
        <Caret />
        {sep}
        <span className="w-[46px]">sap2008</span>
        {sep}
        <span className="w-[18px]">INS</span>
        {sep}
        <span className="w-[60px]" />
        <Icon w={16} h={16}>
          <rect x=".500" y="7.500" width="11" height="7" fill="#8fb4d6" stroke="#0e4f86" />
          <path d="M8.500 7V3q0-2 2-2h2q2 0 2 2v3" stroke="#404040" strokeWidth="1.800" />
        </Icon>
      </div>
      <span className="pointer-events-none absolute top-1 right-[15px] font-['Liberation_Sans','Noto_Sans_CJK_SC',sans-serif] text-[18px] leading-6 whitespace-nowrap text-[#606060]/60">
        CSDN @外行看SAP
      </span>
    </footer>
  );
}

const taskWidths = ["w-[46px]", "w-[228px]", "w-[160px]", "w-[160px]", "w-[161px]", "w-[160px]", "w-[160px]", "w-[162px]", "w-[211px]"];

function TaskBar() {
  return (
    <div className="flex h-[9px] shrink-0 flex-col bg-[#d4d0c8]">
      <div className="h-[3px] shrink-0 border-y border-[#b9c0cc] bg-[#e8ebf0]" />
      <div className="h-[3px] shrink-0 border-t border-white" />
      <div className="flex h-[3px] overflow-hidden">
        {taskWidths.map((w, i) => (
          <span
            key={i}
            className={`${w} shrink-0 border-t ${i === 3 ? "border-t-2 border-[#404040]" : "border-r border-t-white border-r-[#404040]"}`}
          />
        ))}
        <span className="flex-1 border-t border-l border-[#808080]" />
      </div>
    </div>
  );
}

export default function App() {
  return (
    <div className={`relative flex h-screen flex-col overflow-hidden bg-white text-[12px] text-black ${UI_FONT}`}>
      <MenuBar />
      <WindowControls />
      <SystemToolbar />
      <div className="h-2 shrink-0 bg-[linear-gradient(#ffffff,#e4eaf3)]" />
      <main className="ml-[11px] flex min-h-0 flex-1 flex-col border-b border-l border-[#ccd5e2] bg-[#e8eff6]">
        <div className="shrink-0 border-t border-l border-[#94a9c0] bg-[#cddbe6]">
          <h1 className="h-[31px] border-b border-[#eaf2f8] bg-[linear-gradient(#d3e3f1,#b0c8dc_60%,#abc3dc)] pl-[15px] text-[17px] leading-[27px] font-bold italic">
            Runtime Analysis: Display Measurement
          </h1>
          <div className="flex h-[33px] items-start gap-2 border-b border-[#a5b8ca] pt-1.5 pl-[11px]">
            <ToolButton label="Save layout"><SaveLayout /></ToolButton>
            <ToolButton label="Filter"><Funnel /></ToolButton>
            <ToolButton label="Refresh"><Refresh /></ToolButton>
            <ToolButton label="Merge"><Merge /></ToolButton>
          </div>
        </div>
        <HeaderFields />
        <div role="tablist" className="mt-1 flex shrink-0 pl-4">
          {tabs.map((t, i) => (
            <Tab key={t} label={t} width={tabWidths[i]} active={i === 0} />
          ))}
        </div>
        <div className="mr-[5px] mb-6 ml-[3px] flex min-h-0 flex-1 flex-col border border-[#93afd0] bg-[#deebf5]">
          <div className="h-[3px] shrink-0 border-y border-[#7599c4] bg-[#a9c6e6]" />
          <div className="mt-4 mb-2.5 grid min-h-0 flex-1 grid-cols-2 gap-0.5 px-[3px]">
            <ProfilePane />
            <HitListPane />
          </div>
        </div>
      </main>
      <StatusBar />
      <TaskBar />
      <FindDialog />
    </div>
  );
}
